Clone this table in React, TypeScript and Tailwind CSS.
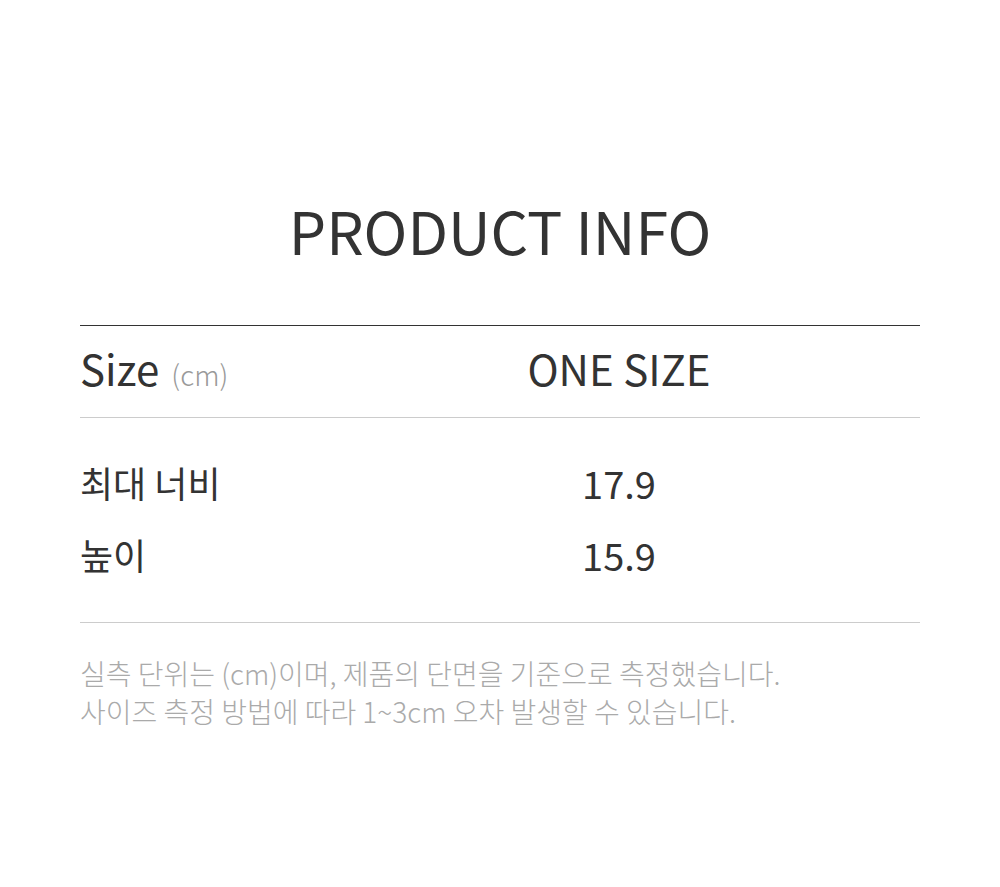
const FONT = "font-['Noto_Sans_CJK_KR','Noto_Sans',sans-serif]";

const rows = [
  { label: '최대 너비', value: '17.9' },
  { label: '높이', value: '15.9' },
];

export default function App() {
  return (
    <div className={`w-[1000px] h-[887px] bg-white ${FONT} text-[#333]`}>
      <div className="px-20 pt-[190px]">
        <h1 className="text-center text-[59px] leading-[80px] font-normal">
          PRODUCT INFO
        </h1>

        <div className="mt-[55px] border-t border-[#333]">
          <div className="grid grid-cols-[238px_1fr] items-center h-[92px] pb-2 border-b border-[#ccc]">
            <div className="flex items-baseline gap-3">
              <span className="text-[42px]">Size</span>
              <span className="text-[28px] text-[#999] font-light">(cm)</span>
            </div>
            <div className="text-center text-[42px]">ONE SIZE</div>
          </div>

          <div className="pt-7 pb-8 border-b border-[#ccc]">
            {rows.map((row) => (
              <div key={row.label} className="grid grid-cols-[238px_1fr] items-center h-[72px] text-[36px]">
                <div>{row.label}</div>
                <div className="text-center text-[38px]">{row.value}</div>
              </div>
            ))}
          </div>
        </div>

        <p className="mt-[31px] text-[28px] leading-[38px] text-[#aaa] font-light">
          실측 단위는 (cm)이며, 제품의 단면을 기준으로 측정했습니다.
          <br />
          사이즈 측정 방법에 따라 1~3cm 오차 발생할 수 있습니다.
        </p>
      </div>
    </div>
  );
}
